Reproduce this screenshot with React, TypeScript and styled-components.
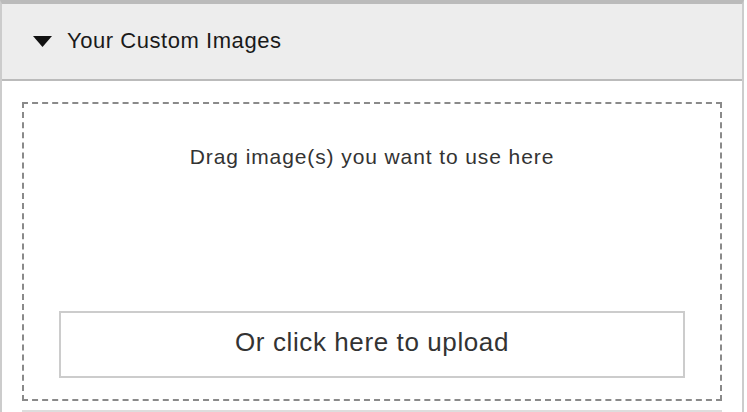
import styled, {createGlobalStyle} from "styled-components";

const GlobalStyle = createGlobalStyle`
  html, body {
    margin: 0;
    padding: 0;
    background: #ffffff;
    font-family: "Liberation Sans", Arial, sans-serif;
  }
`;

export default function App() {
    return (
        <>
            <GlobalStyle/>
            <Panel>
                <Header>
                    <Caret viewBox="0 0 19 11">
                        <polygon points="0,0 19,0 9.5,11"/>
                    </Caret>
                    <Title>Your Custom Images</Title>
                </Header>
                <Body>
                    <DropZone>
                        <DropHint>Drag image(s) you want to use here</DropHint>
                        <UploadButton type="button">Or click here to upload</UploadButton>
                    </DropZone>
                    <NextItem/>
                </Body>
            </Panel>
        </>
    );
}

const Panel = styled.section`
  width: 744px;
  box-sizing: border-box;
  border-top: 4px solid #bbbbbb;
  border-left: 2px solid #cccccc;
  border-right: 2px solid #cccccc;
  overflow: hidden;
`;

const Header = styled.div`
  height: 77px;
  box-sizing: border-box;
  display: flex;
  align-items: center;
  gap: 15px;
  padding-left: 31px;
  padding-bottom: 1px;
  background: #ededed;
  border-bottom: 2px solid #bbbbbb;
`;

const Caret = styled.svg`
  width: 19px;
  height: 11px;
  fill: #111111;
  flex-shrink: 0;
`;

const Title = styled.span`
  font-size: 22px;
  color: #1a1a1a;
  letter-spacing: 0.55px;
`;

const Body = styled.div`
  padding: 21px 20px 0;
  height: 340px;
  box-sizing: border-box;
`;

const DropZone = styled.div`
  height: 299px;
  box-sizing: border-box;
  border: 2px dashed #8a8a8a;
  display: flex;
  flex-direction: column;
  align-items: center;
  padding: 0 35px 21px;
`;

const DropHint = styled.p`
  margin: 41px 0 0;
  font-size: 21px;
  line-height: 24px;
  color: #333333;
  letter-spacing: 0.9px;
`;

const UploadButton = styled.button`
  margin-top: auto;
  align-self: stretch;
  height: 67px;
  box-sizing: border-box;
  background: #ffffff;
  border: 2px solid #cccccc;
  font-family: "Liberation Sans", Arial, sans-serif;
  font-size: 26px;
  color: #333333;
  letter-spacing: 0.6px;
  padding: 0 0 4px;
  cursor: pointer;
`;

const NextItem = styled.div`
  margin-top: 9px;
  height: 20px;
  border-top: 2px solid #dddddd;
`;
